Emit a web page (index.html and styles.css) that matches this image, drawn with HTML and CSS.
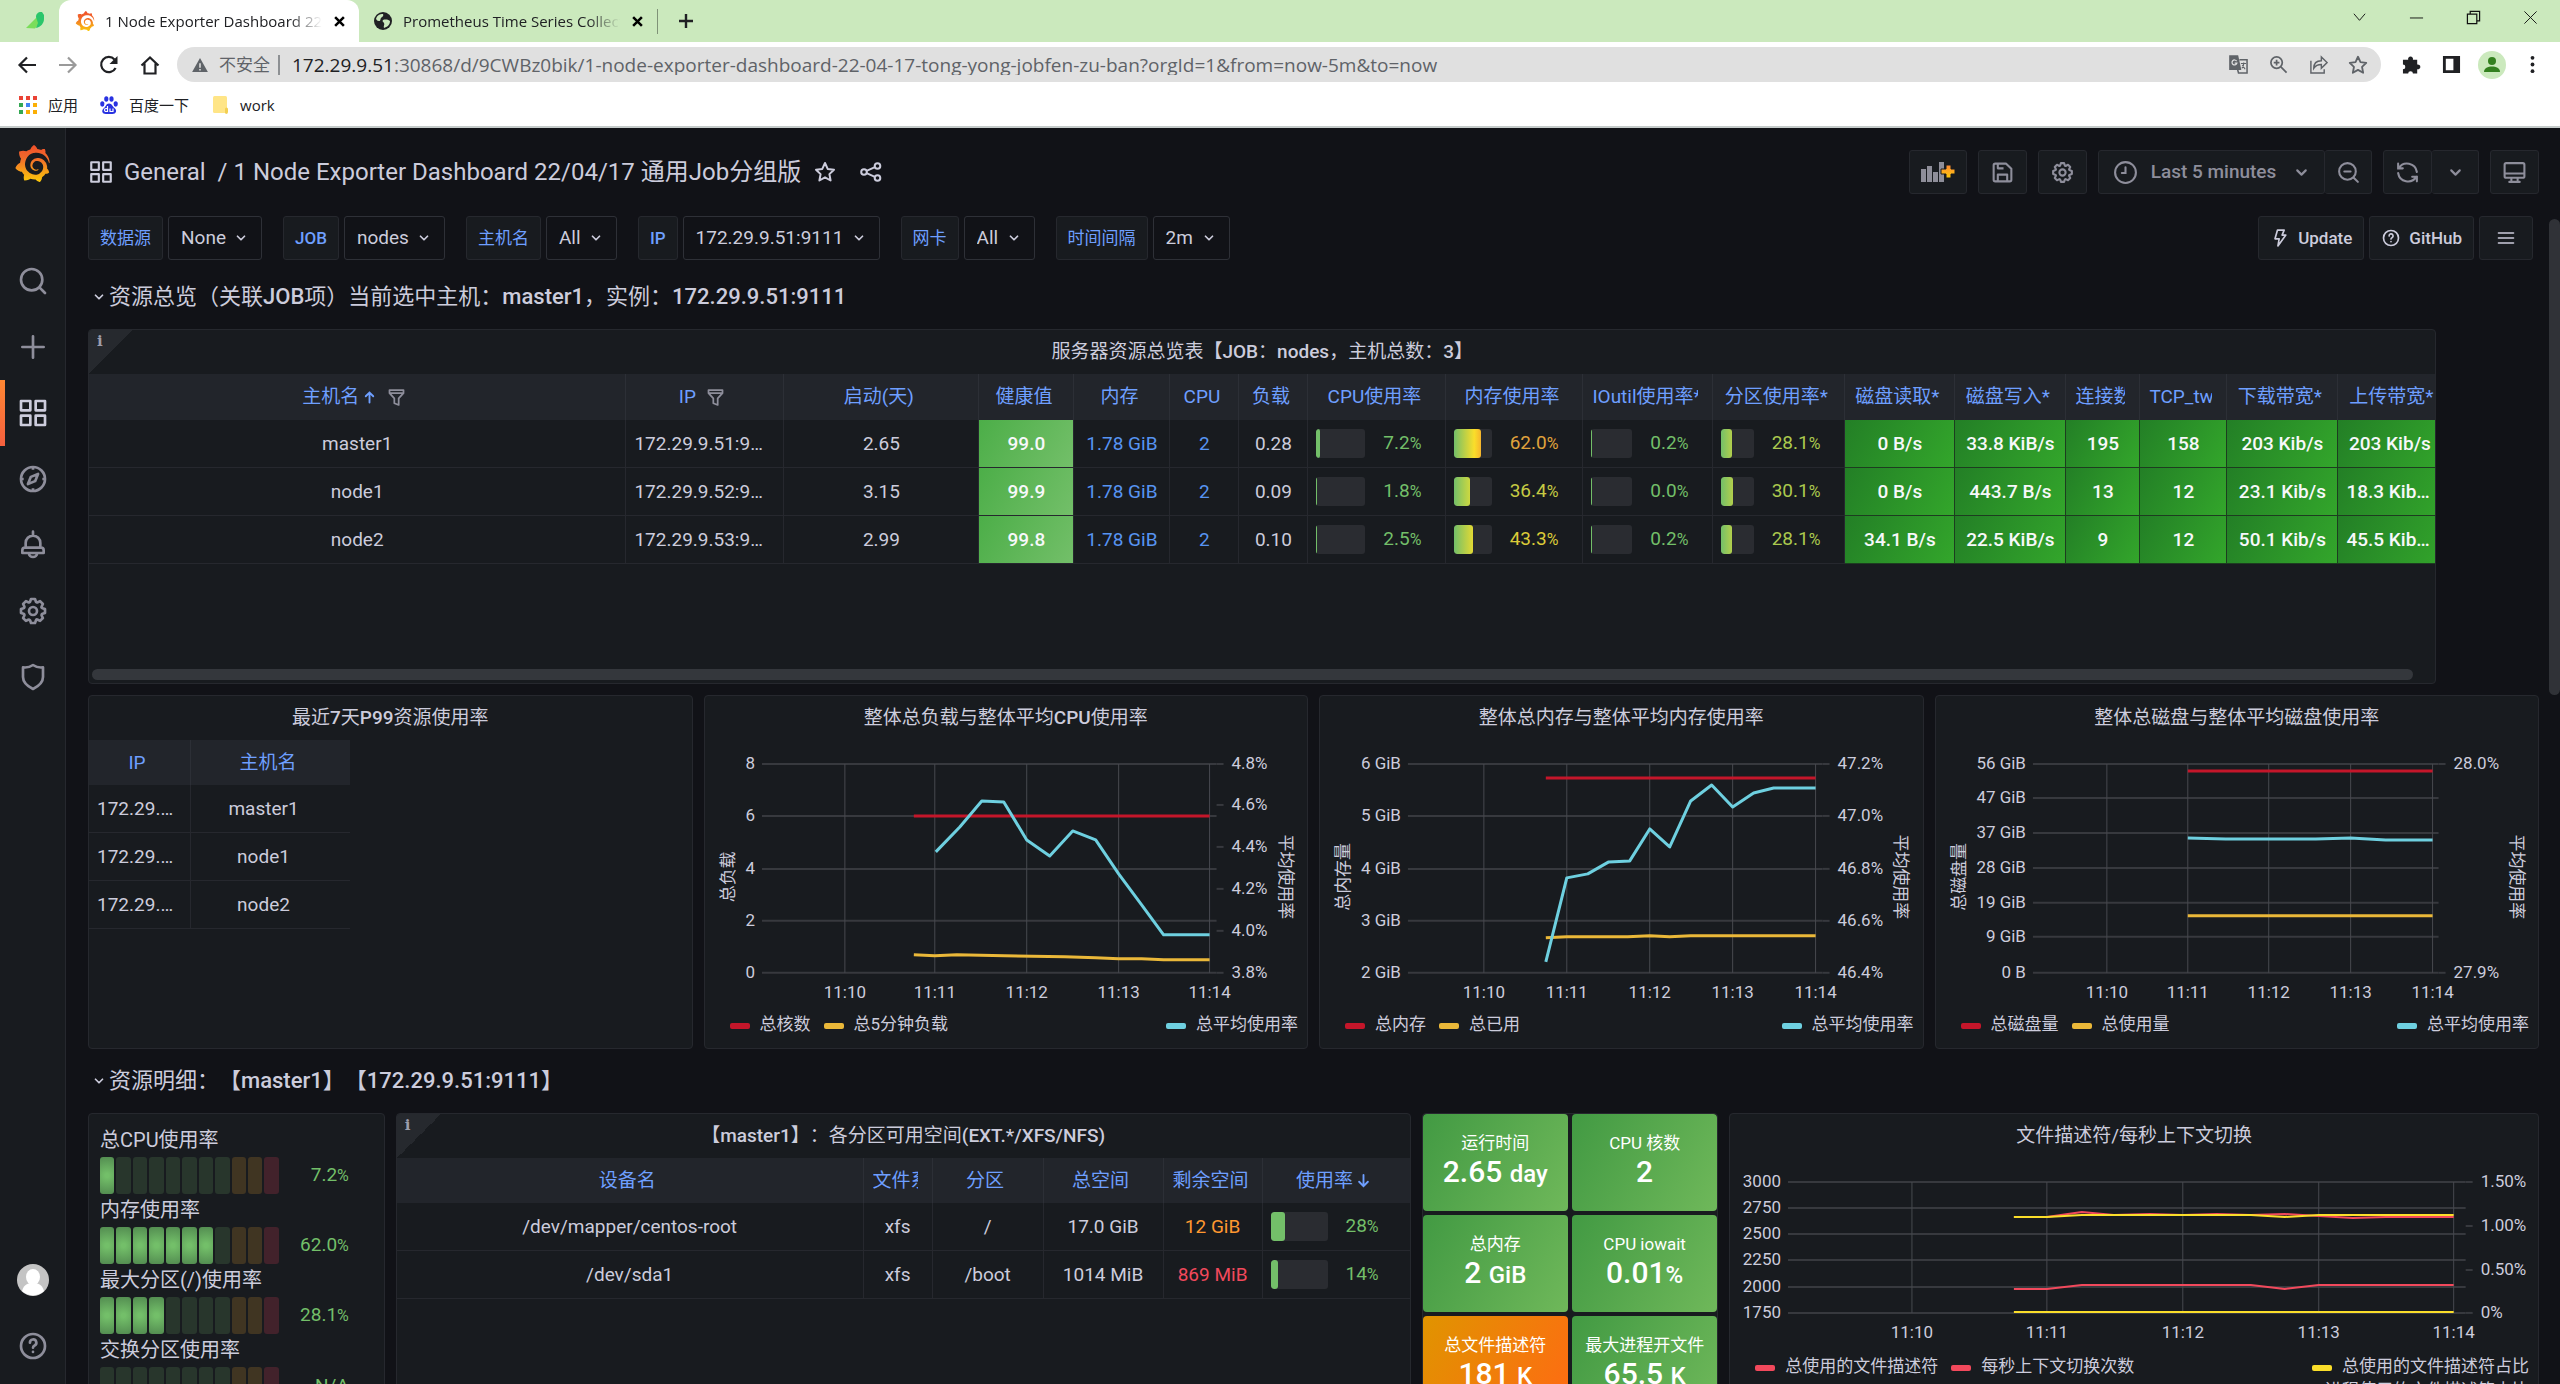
FILE: index.html
```html
<!DOCTYPE html>
<html lang="zh-CN">
<head>
<meta charset="utf-8">
<title>1 Node Exporter Dashboard 22/04/17 - Grafana</title>
<link rel="stylesheet" href="styles.css">
</head>
<body>
<svg class="sprite" width="0" height="0" aria-hidden="true">
  <defs>
    <linearGradient id="flame" x1="0" y1="0" x2="0" y2="1"><stop offset="0" stop-color="#f0502a"/><stop offset=".35" stop-color="#f1692b"/><stop offset="1" stop-color="#fbca0a"/></linearGradient>
    <linearGradient id="plusfill" x1="0" y1="0" x2="0" y2="1"><stop offset="0" stop-color="#ff8833"/><stop offset="1" stop-color="#fbca0a"/></linearGradient>
  </defs>
  <symbol id="i-grafana" viewBox="0 0 24 24"><path fill="url(#flame)" d="M23.02 10.59a8.578 8.578 0 0 0-.862-3.034 8.911 8.911 0 0 0-1.789-2.445c.337-1.342-.413-2.505-.413-2.505-1.292-.08-2.113.4-2.416.62-.052-.02-.102-.044-.154-.064-.22-.089-.446-.172-.677-.247-.231-.073-.47-.14-.711-.197a9.867 9.867 0 0 0-.875-.161C14.557.753 12.94 0 12.94 0c-1.804 1.145-2.147 2.744-2.147 2.744l-.018.093c-.098.029-.2.057-.298.088-.138.042-.275.094-.413.143-.138.055-.275.107-.41.166a8.869 8.869 0 0 0-1.557.87l-.063-.029c-2.497-.955-4.716.195-4.716.195-.203 2.658.996 4.33 1.235 4.636a11.608 11.608 0 0 0-.607 2.635C1.636 12.677.953 15.014.953 15.014c1.926 2.214 4.171 2.351 4.171 2.351.003-.002.006-.002.006-.005.285.509.615.994.986 1.446.156.19.32.371.488.548-.704 2.009.099 3.68.099 3.68 2.144.08 3.553-.937 3.849-1.173a9.784 9.784 0 0 0 3.164.501h.08l.055-.003.107-.002.103-.005.003.002c1.01 1.44 2.788 1.646 2.788 1.646 1.264-1.332 1.337-2.653 1.337-2.94v-.058c0-.02-.003-.039-.003-.06.265-.187.52-.387.758-.6a7.875 7.875 0 0 0 1.415-1.7c1.43.083 2.437-.885 2.437-.885-.236-1.49-1.085-2.216-1.264-2.354l-.018-.013-.016-.013a.217.217 0 0 1-.031-.02c.008-.092.016-.18.02-.27.011-.162.016-.323.016-.48v-.253l-.005-.098-.008-.135a1.891 1.891 0 0 0-.01-.13c-.003-.042-.008-.083-.013-.125l-.016-.124-.018-.122a6.215 6.215 0 0 0-2.032-3.73 6.015 6.015 0 0 0-3.222-1.46 6.292 6.292 0 0 0-.85-.048l-.107.002h-.063l-.044.003-.104.008a4.777 4.777 0 0 0-3.335 1.695c-.332.4-.592.84-.768 1.297a4.594 4.594 0 0 0-.312 1.817l.003.091c.005.055.007.11.013.164a3.615 3.615 0 0 0 .698 1.82 3.53 3.53 0 0 0 1.827 1.282c.33.098.66.14.971.137.039 0 .078 0 .114-.002l.063-.003c.02 0 .041-.003.062-.003.034-.002.065-.007.099-.01.007 0 .018-.003.028-.003l.031-.005.06-.008a1.18 1.18 0 0 0 .112-.02c.036-.008.072-.013.109-.024a2.634 2.634 0 0 0 .914-.415c.028-.02.056-.041.085-.065a.248.248 0 0 0 .039-.35.244.244 0 0 0-.309-.06l-.078.042c-.09.044-.184.083-.283.116a2.476 2.476 0 0 1-.475.096c-.028.003-.054.006-.083.006l-.083.002c-.026 0-.054 0-.08-.002l-.102-.006h-.012l-.024.006c-.016-.003-.031-.003-.044-.006-.031-.002-.06-.007-.091-.01a2.59 2.59 0 0 1-.724-.213 2.557 2.557 0 0 1-.667-.438 2.52 2.52 0 0 1-.805-1.475 2.306 2.306 0 0 1-.029-.444l.006-.122v-.023l.002-.031c.003-.021.003-.04.005-.06a3.163 3.163 0 0 1 1.352-2.29 3.12 3.12 0 0 1 .937-.43 2.946 2.946 0 0 1 .776-.101h.06l.07.002.045.003h.026l.07.005a4.041 4.041 0 0 1 1.635.49 3.94 3.94 0 0 1 1.602 1.662 3.77 3.77 0 0 1 .397 1.414l.005.076.003.075c.002.026.002.05.002.075 0 .024.003.052 0 .07v.065l-.002.073-.008.174a6.195 6.195 0 0 1-.08.639 5.1 5.1 0 0 1-.267.927 5.31 5.31 0 0 1-.624 1.13 5.052 5.052 0 0 1-3.237 2.014 4.82 4.82 0 0 1-.649.066l-.039.003h-.287a6.607 6.607 0 0 1-1.716-.265 6.776 6.776 0 0 1-3.4-2.274 6.75 6.75 0 0 1-.746-1.15 6.616 6.616 0 0 1-.714-2.596l-.005-.083-.002-.02v-.056l-.003-.073v-.096l-.003-.104v-.07l.003-.163c.008-.22.026-.45.054-.678a8.707 8.707 0 0 1 .28-1.355c.128-.444.286-.872.473-1.277a7.04 7.04 0 0 1 1.456-2.1 5.925 5.925 0 0 1 .953-.763c.169-.111.343-.213.524-.306.089-.05.182-.091.273-.135.047-.02.093-.042.138-.062a7.177 7.177 0 0 1 .714-.267l.145-.045c.049-.015.098-.026.148-.041.098-.029.197-.052.296-.076.049-.013.1-.02.15-.033l.15-.032.151-.028.076-.013.075-.01.153-.024c.057-.01.114-.013.171-.023l.169-.021c.036-.003.073-.008.106-.01l.073-.008.036-.003.042-.002c.057-.003.114-.008.171-.01l.086-.006h.023l.037-.003.145-.007a7.999 7.999 0 0 1 1.708.125 7.917 7.917 0 0 1 2.048.68 8.253 8.253 0 0 1 1.672 1.09l.09.077.089.078c.06.052.114.107.171.159.057.052.112.106.166.16.052.055.107.107.159.164a8.671 8.671 0 0 1 1.41 1.978c.012.026.028.052.04.078l.04.078.075.156c.023.051.05.1.07.153l.065.15a8.848 8.848 0 0 1 .45 1.34.19.19 0 0 0 .201.142.186.186 0 0 0 .172-.184c.01-.246.002-.532-.024-.856z"/></symbol>
  <symbol id="i-cog" viewBox="0 0 24 24"><path fill="currentColor" d="M21.32,9.55l-1.89-.63.89-1.78A1,1,0,0,0,20.13,6L18,3.87a1,1,0,0,0-1.15-.19l-1.78.89-.63-1.89A1,1,0,0,0,13.5,2h-3a1,1,0,0,0-.95.68L8.92,4.57,7.14,3.68A1,1,0,0,0,6,3.87L3.87,6a1,1,0,0,0-.19,1.15l.89,1.78-1.89.63A1,1,0,0,0,2,10.5v3a1,1,0,0,0,.68.95l1.89.63-.89,1.78A1,1,0,0,0,3.87,18L6,20.13a1,1,0,0,0,1.15.19l1.78-.89.63,1.89a1,1,0,0,0,.95.68h3a1,1,0,0,0,.95-.68l.63-1.89,1.78.89A1,1,0,0,0,18,20.13L20.13,18a1,1,0,0,0,.19-1.15l-.89-1.78,1.89-.63A1,1,0,0,0,22,13.5v-3A1,1,0,0,0,21.32,9.55ZM20,12.78l-1.2.4A2,2,0,0,0,17.64,16l.57,1.14-1.1,1.1L16,17.64a2,2,0,0,0-2.79,1.16l-.4,1.2H11.22l-.4-1.2A2,2,0,0,0,8,17.64l-1.14.57-1.1-1.1L6.36,16A2,2,0,0,0,5.2,13.18L4,12.78V11.22l1.2-.4A2,2,0,0,0,6.36,8L5.79,6.89l1.1-1.1L8,6.36A2,2,0,0,0,10.82,5.2l.4-1.2h1.56l.4,1.2A2,2,0,0,0,16,6.36l1.14-.57,1.1,1.1L17.64,8a2,2,0,0,0,1.16,2.79l1.2.4ZM12,8a4,4,0,1,0,4,4A4,4,0,0,0,12,8Zm0,6a2,2,0,1,1,2-2A2,2,0,0,1,12,14Z"/></symbol>
  <symbol id="i-apps" viewBox="0 0 24 24"><g fill="none" stroke="currentColor" stroke-width="2" stroke-linejoin="round"><path d="M3 3h7v7H3zM14 3h7v7h-7zM3 14h7v7H3zM14 14h7v7h-7z"/></g></symbol>
  <symbol id="i-search" viewBox="0 0 24 24"><g fill="none" stroke="currentColor" stroke-width="2" stroke-linecap="round"><circle cx="11" cy="11" r="8"/><path d="M17 17l4 4"/></g></symbol>
  <symbol id="i-plus" viewBox="0 0 24 24"><path d="M12 4v16M4 12h16" fill="none" stroke="currentColor" stroke-width="2" stroke-linecap="round"/></symbol>
  <symbol id="i-compass" viewBox="0 0 24 24"><g fill="none" stroke="currentColor" stroke-width="2" stroke-linejoin="round"><circle cx="12" cy="12" r="9"/><path d="M12 3v2M12 19v2M3 12h2M19 12h2M15.8 8.2l-2.2 5.4-5.4 2.2 2.2-5.4z"/></g></symbol>
  <symbol id="i-bell" viewBox="0 0 24 24"><path d="M12 2v3M12 5a5.500 5.500 0 0 0-5.500 5.500V14h11v-3.500A5.500 5.500 0 0 0 12 5zM6 14a2 2 0 0 0-2 2v2h16v-2a2 2 0 0 0-2-2zM9 18.500a3 2.500 0 0 0 6 0" fill="none" stroke="currentColor" stroke-width="2" stroke-linejoin="round" stroke-linecap="round"/></symbol>
  <symbol id="i-shield" viewBox="0 0 24 24"><path d="M4.500 4.800c3 .4 5.200-.2 7.500-1.800 2.300 1.600 4.500 2.200 7.500 1.800v7.200c0 3.700-3.500 7-7.500 9-4-2-7.500-5.300-7.500-9z" fill="none" stroke="currentColor" stroke-width="2" stroke-linejoin="round"/></symbol>
  <symbol id="i-help" viewBox="0 0 24 24"><g fill="none" stroke="currentColor" stroke-width="2" stroke-linecap="round"><circle cx="12" cy="12" r="9"/><path d="M9.700 9.500a2.400 2.400 0 1 1 3.500 2.100c-.8.4-1.200.8-1.200 1.700M12 16.400v.1"/></g></symbol>
  <symbol id="i-star" viewBox="0 0 24 24"><path d="M12 3l2.700 5.900 6.300.8-4.600 4.400 1.200 6.400L12 17.300l-5.600 3.200 1.200-6.400L3 9.700l6.300-.8z" fill="none" stroke="currentColor" stroke-width="2" stroke-linejoin="round"/></symbol>
  <symbol id="i-share" viewBox="0 0 24 24"><g fill="none" stroke="currentColor" stroke-width="2"><circle cx="5" cy="12" r="2.800"/><circle cx="18.500" cy="6" r="2.800"/><circle cx="18.500" cy="18" r="2.800"/><path d="M7.600 10.800l8.300-3.700M7.600 13.200l8.300 3.700"/></g></symbol>
  <symbol id="i-down" viewBox="0 0 24 24"><path d="M6 9l6 6 6-6" fill="none" stroke="currentColor" stroke-width="3" stroke-linecap="round" stroke-linejoin="round"/></symbol>
  <symbol id="i-save" viewBox="0 0 24 24"><path d="M3.500 5a1.500 1.500 0 0 1 1.500-1.500h10.500l5 5V19a1.500 1.500 0 0 1-1.500 1.500H5A1.500 1.500 0 0 1 3.500 19zM7.500 3.500V8H13M7.500 20.500V14h9v6.500" fill="none" stroke="currentColor" stroke-width="2" stroke-linejoin="round"/></symbol>
  <symbol id="i-clock" viewBox="0 0 24 24"><g fill="none" stroke="currentColor" stroke-width="2" stroke-linecap="round"><circle cx="12" cy="12" r="10"/><path d="M12 7v5.500H8.500"/></g></symbol>
  <symbol id="i-zoomout" viewBox="0 0 24 24"><g fill="none" stroke="currentColor" stroke-width="2" stroke-linecap="round"><circle cx="11" cy="11" r="8"/><path d="M17 17l4 4M8 11h6"/></g></symbol>
  <symbol id="i-sync" viewBox="0 0 24 24"><path d="M3 3.500V8h4.500M3.500 8a9.500 9.500 0 0 1 17.500 3.500M21 20.500V16h-4.500M20.500 16A9.500 9.500 0 0 1 3 12.500" fill="none" stroke="currentColor" stroke-width="2" stroke-linecap="round"/></symbol>
  <symbol id="i-monitor" viewBox="0 0 24 24"><path d="M4 3h16a1.500 1.500 0 0 1 1.500 1.500v11A1.500 1.500 0 0 1 20 17H4a1.500 1.500 0 0 1-1.500-1.500v-11A1.500 1.500 0 0 1 4 3zM2.500 13h19M9 17v2.500M15 17v2.500M7 21h10" fill="none" stroke="currentColor" stroke-width="2" stroke-linecap="round"/></symbol>
  <symbol id="i-bolt" viewBox="0 0 24 24"><path d="M9 2.500h8l-2.500 6H19l-9.500 13L11 13H6z" fill="none" stroke="currentColor" stroke-width="2" stroke-linejoin="round"/></symbol>
  <symbol id="i-menu" viewBox="0 0 24 24"><path d="M3 6h18M3 12h18M3 18h18" fill="none" stroke="currentColor" stroke-width="2" stroke-linecap="round"/></symbol>
  <symbol id="i-filter" viewBox="0 0 24 24"><path d="M4 3.500h16V7l-5.500 6v7.500l-5-2V13L4 7zM4 7h16" fill="none" stroke="currentColor" stroke-width="2" stroke-linejoin="round"/></symbol>
  <symbol id="i-up" viewBox="0 0 24 24"><path d="M12 20V4M6 10l6-6 6 6" fill="none" stroke="currentColor" stroke-width="3" stroke-linecap="round"/></symbol>
  <symbol id="i-arrowdown" viewBox="0 0 24 24"><path d="M12 3v17M5 14l7 7 7-7" fill="none" stroke="currentColor" stroke-width="3" stroke-linecap="round"/></symbol>
  <symbol id="i-close" viewBox="0 0 24 24"><path d="M5 5l14 14M19 5L5 19" fill="none" stroke="currentColor" stroke-width="4"/></symbol>
</svg>

<header class="browser">
  <div class="tabs">
    <svg class="pinned" viewBox="0 0 20 20"><path d="M1 17L12 6l3 6-5 5.500z" fill="#7bdd5a"/><path d="M11 6c0-3 2-5 5-5h1l2 3v4c0 4-3 8-8 9l2-5z" fill="#2bc66b"/></svg>
    <div class="tab active">
      <svg class="fav"><use href="#i-grafana"/></svg>
      <span class="tab-title">1 Node Exporter Dashboard 22/04/17</span>
      <button class="bare" aria-label="关闭标签页"><svg class="x"><use href="#i-close"/></svg></button>
    </div>
    <div class="tab">
      <svg class="fav" viewBox="0 0 20 20"><circle cx="10" cy="10" r="9" fill="#202124"/><path d="M3 8c1-4 4-5 7-5 1 2-1 3-2 4s0 3-2 3-2-1-3-2zM10 9c3-1 6 0 7 1 0 4-3 6-6 7-1-2 1-3 0-5s-2-1-1-3z" fill="#cbe9bd"/></svg>
      <span class="tab-title">Prometheus Time Series Collection</span>
      <button class="bare" aria-label="关闭标签页"><svg class="x"><use href="#i-close"/></svg></button>
    </div>
    <button class="newtab bare" aria-label="新标签页"><svg viewBox="0 0 16 16"><path d="M8 1v14M1 8h14" stroke="#202124" stroke-width="2.400"/></svg></button>
    <div class="winctl">
      <button class="bare" aria-label="搜索标签页"><svg viewBox="0 0 16 16"><path d="M2 4l6 7 6-7" fill="none" stroke="#111"/></svg></button>
      <button class="bare" aria-label="最小化"><svg viewBox="0 0 16 16"><path d="M1 8.500h14" stroke="#111"/></svg></button>
      <button class="bare" aria-label="还原"><svg viewBox="0 0 16 16"><path d="M1.500 4.500h10v10h-10zM4.500 4V1.500h10v10H12" fill="none" stroke="#111" stroke-width="1.300"/></svg></button>
      <button class="bare" aria-label="关闭"><svg viewBox="0 0 16 16"><path d="M1.500 1.500l13 13M14.500 1.500l-13 13" stroke="#111"/></svg></button>
    </div>
  </div>
  <div class="navbar">
    <button class="bare nav" aria-label="后退"><svg viewBox="0 0 20 20"><path d="M19 10H3M10 2.500L2.500 10l7.500 7.500" fill="none" stroke="#202124" stroke-width="2.200"/></svg></button>
    <button class="bare nav" aria-label="前进"><svg viewBox="0 0 20 20"><path d="M1 10h16M10 2.500l7.500 7.500-7.500 7.500" fill="none" stroke="#9a9a9a" stroke-width="2.200"/></svg></button>
    <button class="bare nav" aria-label="重新加载"><svg viewBox="0 0 20 20"><path d="M16.600 13A7.600 7.600 0 1 1 15.500 4.500" fill="none" stroke="#202124" stroke-width="2.200"/><path d="M18.500 1v8h-8z" fill="#202124"/></svg></button>
    <button class="bare nav" aria-label="主页"><svg viewBox="0 0 20 20"><path d="M1.500 10.500L10 2.500l8.500 8M4.500 8.500v10h11v-10" fill="none" stroke="#202124" stroke-width="2.200"/></svg></button>
    <div class="omnibox">
      <svg class="warn" viewBox="0 0 18 16"><path d="M9 0l9 16H0z" fill="#5f6368"/><path d="M9 6v5M9 12.500v1.800" stroke="#e0e0e0" stroke-width="1.800"/></svg>
      <span class="insecure">不安全</span>
      <label class="host" for="url">172.29.9.51</label>
      <input id="url" type="text" value=":30868/d/9CWBz0bik/1-node-exporter-dashboard-22-04-17-tong-yong-jobfen-zu-ban?orgId=1&amp;from=now-5m&amp;to=now">
      <svg class="omi" viewBox="0 0 20 20"><path d="M1 1h8l3 14H1zM11 5h8v14h-9l-1-4" fill="none" stroke="#5f6368" stroke-width="1.600"/><path d="M1 1h8l3 14H1z" fill="#5f6368"/><path d="M8 6.500a2.600 2.600 0 1 0 .3 2H6" fill="none" stroke="#e0e0e0" stroke-width="1.300"/><path d="M12.500 9H18M15.500 8v1c0 2-1 4-2 5M14 10.500l3 4.500" fill="none" stroke="#5f6368" stroke-width="1.200"/></svg>
      <svg class="omi" viewBox="0 0 20 20"><g fill="none" stroke="#5f6368" stroke-width="1.800"><circle cx="8" cy="8" r="6"/><path d="M12.500 12.500l6 6M8 5v6M5 8h6"/></g></svg>
      <svg class="omi" viewBox="0 0 20 20"><path d="M2 6v13h14v-4M5 14c0-5 3-8 8-8V2l6 6-6 6v-4c-4 0-6 1-8 4z" fill="none" stroke="#5f6368" stroke-width="1.500"/></svg>
      <svg class="omi star"><use href="#i-star"/></svg>
    </div>
    <svg class="ext" viewBox="0 0 20 20"><path d="M1 5h5.500a2.600 2.600 0 1 1 5 0H16v5a2.600 2.600 0 1 1 0 5v4.500h-4.500a2.500 2.500 0 0 0-5 0H1V15a2.500 2.500 0 0 0 0-5z" fill="#202124"/></svg>
    <svg class="ext" viewBox="0 0 20 20"><path d="M2.500 2.500h15v15h-15z" fill="none" stroke="#202124" stroke-width="3"/><path d="M12 2h6v16h-6z" fill="#202124"/></svg>
    <svg class="me" viewBox="0 0 28 28"><circle cx="14" cy="14" r="14" fill="#cbe9bd"/><circle cx="14" cy="10" r="4" fill="#33801f"/><path d="M6 21c0-4 4-5.500 8-5.500s8 1.500 8 5.500z" fill="#33801f"/></svg>
    <svg class="ext" viewBox="0 0 20 20"><g fill="#202124"><circle cx="10" cy="3" r="2"/><circle cx="10" cy="10" r="2"/><circle cx="10" cy="17" r="2"/></g></svg>
  </div>
  <nav class="bookmarks">
    <a href="#"><svg class="bm" viewBox="0 0 18 18"><path d="M0 0h4v4H0zM7 0h4v4H7zM14 0h4v4h-4z" fill="#ea4335"/><path d="M0 7h4v4H0zM0 14h4v4H0z" fill="#34a853"/><path d="M7 7h4v4H7z" fill="#4285f4"/><path d="M14 7h4v4h-4zM7 14h4v4H7zM14 14h4v4h-4z" fill="#fbaf04"/></svg>应用</a>
    <a href="#"><svg class="bm" viewBox="0 0 18 18"><g fill="#2932e1"><ellipse cx="2.300" cy="8" rx="2.100" ry="2.700"/><ellipse cx="6.300" cy="3" rx="2.100" ry="2.800"/><ellipse cx="11.500" cy="3" rx="2.100" ry="2.800"/><ellipse cx="15.700" cy="8" rx="2.100" ry="2.700"/><path d="M9 7.500c3 0 3.500 3 5.500 4.500 3 2.500 1.500 6-2 6H6c-4 0-5-3.500-2-6 2-1.500 2-4.500 5-4.500z"/></g><path d="M7.500 10v5.500H6a1.500 1.500 0 0 1 0-3h1.500M10 12.500v3h3v-3" fill="none" stroke="#fff" stroke-width="1.200"/></svg>百度一下</a>
    <a href="#"><svg class="bm" viewBox="0 0 18 18"><path d="M2 1.500A1.500 1.500 0 0 1 3.500 0h11A1.500 1.500 0 0 1 16 1.500V17H3.500A1.500 1.500 0 0 1 2 15.500z" fill="#ffe587"/><path d="M14 17v-4a1.500 1.500 0 0 1 3 0v3a2 2 0 0 1-2 2z" fill="#f3cf52"/></svg>work</a>
  </nav>
</header>

<div class="app">
  <aside class="side">
    <a class="logo" href="#" aria-label="Grafana"><svg><use href="#i-grafana"/></svg></a>
    <a href="#" aria-label="Search"><svg><use href="#i-search"/></svg></a>
    <a href="#" aria-label="Create"><svg><use href="#i-plus"/></svg></a>
    <a class="on" href="#" aria-label="Dashboards"><svg><use href="#i-apps"/></svg></a>
    <a href="#" aria-label="Explore"><svg><use href="#i-compass"/></svg></a>
    <a href="#" aria-label="Alerting"><svg><use href="#i-bell"/></svg></a>
    <a href="#" aria-label="Configuration"><svg><use href="#i-cog"/></svg></a>
    <a href="#" aria-label="Server Admin"><svg><use href="#i-shield"/></svg></a>
    <a class="avatar" href="#" aria-label="Profile"><svg viewBox="0 0 32 32"><circle cx="16" cy="16" r="16" fill="#c4c4c4"/><ellipse cx="16" cy="13" rx="7" ry="8" fill="#fff"/><path d="M5 27c2-7 6-8 11-8s9 1 11 8a16 16 0 0 1-22 0z" fill="#fff"/></svg></a>
    <a href="#" aria-label="Help"><svg><use href="#i-help"/></svg></a>
  </aside>

  <main class="main">
    <div class="topbar">
      <svg class="crumb-icon"><use href="#i-apps"/></svg>
      <h1><a href="#">General</a><a href="#">/ 1 Node Exporter Dashboard 22/04/17 通用Job分组版</a></h1>
      <button class="bare tool" aria-label="Star"><svg><use href="#i-star"/></svg></button>
      <button class="bare tool" aria-label="Share"><svg><use href="#i-share"/></svg></button>
      <div class="actions">
        <button class="btn wide" aria-label="Add panel"><svg class="addpanel" viewBox="0 0 34 20"><path d="M0 7h5v13H0zM6 4h5v16H6zM12 10h5v10h-5zM18 0h5v20h-5z" fill="#8e8e99"/><path d="M25 3h5v4h4v5h-4v4h-5v-4h-5V7h5z" fill="url(#plusfill)" stroke="#181b1f"/></svg></button>
        <button class="btn" aria-label="Save"><svg><use href="#i-save"/></svg></button>
        <button class="btn" aria-label="Settings"><svg><use href="#i-cog"/></svg></button>
        <div class="group">
          <button class="btn time"><svg><use href="#i-clock"/></svg>Last 5 minutes<svg class="chev"><use href="#i-down"/></svg></button>
          <button class="btn" aria-label="Zoom out"><svg><use href="#i-zoomout"/></svg></button>
        </div>
        <div class="group">
          <button class="btn" aria-label="Refresh"><svg><use href="#i-sync"/></svg></button>
          <button class="btn" aria-label="Refresh interval"><svg class="chev"><use href="#i-down"/></svg></button>
        </div>
        <button class="btn" aria-label="Cycle view mode"><svg><use href="#i-monitor"/></svg></button>
      </div>
    </div>

    <div class="vars">
      <div class="var"><label for="v1">数据源</label><span class="pick"><select id="v1"><option>None</option></select><svg><use href="#i-down"/></svg></span></div>
      <div class="var"><label for="v2"><b>JOB</b></label><span class="pick"><select id="v2"><option>nodes</option></select><svg><use href="#i-down"/></svg></span></div>
      <div class="var"><label for="v3">主机名</label><span class="pick"><select id="v3"><option>All</option></select><svg><use href="#i-down"/></svg></span></div>
      <div class="var"><label for="v4"><b>IP</b></label><span class="pick"><select id="v4"><option>172.29.9.51:9111</option></select><svg><use href="#i-down"/></svg></span></div>
      <div class="var"><label for="v5">网卡</label><span class="pick"><select id="v5"><option>All</option></select><svg><use href="#i-down"/></svg></span></div>
      <div class="var"><label for="v6">时间间隔</label><span class="pick"><select id="v6"><option>2m</option></select><svg><use href="#i-down"/></svg></span></div>
      <div class="links">
        <a class="link" href="#"><svg><use href="#i-bolt"/></svg>Update</a>
        <a class="link" href="#"><svg><use href="#i-help"/></svg>GitHub</a>
        <a class="link burger" href="#" aria-label="Dashboards"><svg><use href="#i-menu"/></svg></a>
      </div>
    </div>

    <h2 class="row-title"><svg><use href="#i-down"/></svg><span>资源总览（关联<b>JOB</b>项）当前选中主机：<b>master1</b>，实例：<b>172.29.9.51:9111</b></span></h2>

    <div class="grid">
      <section class="panel overview">
        <span class="info">i</span>
        <h3>服务器资源总览表【<b>JOB</b>：<b>nodes</b>，主机总数：<b>3</b>】</h3>
        <div class="tablewrap">
        <table class="t-over">
          <colgroup><col><col style="width:158px"><col style="width:195px"><col style="width:95px"><col style="width:96px"><col style="width:69px"><col style="width:69px"><col style="width:138px"><col style="width:137px"><col style="width:130px"><col style="width:132px"><col style="width:110px"><col style="width:111px"><col style="width:74px"><col style="width:87px"><col style="width:111px"><col style="width:111px"></colgroup>
          <thead><tr><th><span>主机名<svg class="sort"><use href="#i-up"/></svg><svg class="filter"><use href="#i-filter"/></svg></span></th><th><span>IP<svg class="filter"><use href="#i-filter"/></svg></span></th><th><span>启动(天)</span></th><th><span>健康值</span></th><th><span>内存</span></th><th><span>CPU</span></th><th><span>负载</span></th><th><span>CPU使用率</span></th><th><span>内存使用率</span></th><th><span>IOutil使用率*</span></th><th><span>分区使用率*</span></th><th><span>磁盘读取*</span></th><th><span>磁盘写入*</span></th><th><span>连接数</span></th><th><span>TCP_tw</span></th><th><span>下载带宽*</span></th><th><span>上传带宽*</span></th></tr></thead>
          <tbody>
            <tr><td>master1</td><td class="addr">172.29.9.51:9111</td><td>2.65</td><td class="ok">99.0</td><td class="blue">1.78 GiB</td><td class="blue">2</td><td>0.28</td>
              <td><div class="gauge g0"><i><b style="width:7.2%"></b></i><span>7.2<small>%</small></span></div></td>
              <td><div class="gauge g4"><i><b style="width:71%"></b></i><span>62.0<small>%</small></span></div></td>
              <td><div class="gauge g0"><i><b style="width:2%"></b></i><span>0.2<small>%</small></span></div></td>
              <td><div class="gauge g1"><i><b style="width:32%"></b></i><span>28.1<small>%</small></span></div></td>
              <td class="deep">0 B/s</td><td class="deep">33.8 KiB/s</td><td class="deep">195</td><td class="deep">158</td><td class="deep">203 Kib/s</td><td class="deep last">203 Kib/s</td></tr>
            <tr><td>node1</td><td class="addr">172.29.9.52:9111</td><td>3.15</td><td class="ok">99.9</td><td class="blue">1.78 GiB</td><td class="blue">2</td><td>0.09</td>
              <td><div class="gauge g0"><i><b style="width:2%"></b></i><span>1.8<small>%</small></span></div></td>
              <td><div class="gauge g2"><i><b style="width:41%"></b></i><span>36.4<small>%</small></span></div></td>
              <td><div class="gauge g0"><i><b style="width:2%"></b></i><span>0.0<small>%</small></span></div></td>
              <td><div class="gauge g1"><i><b style="width:36%"></b></i><span>30.1<small>%</small></span></div></td>
              <td class="deep">0 B/s</td><td class="deep">443.7 B/s</td><td class="deep">13</td><td class="deep">12</td><td class="deep">23.1 Kib/s</td><td class="deep last">18.3 Kib/s</td></tr>
            <tr><td>node2</td><td class="addr">172.29.9.53:9111</td><td>2.99</td><td class="ok">99.8</td><td class="blue">1.78 GiB</td><td class="blue">2</td><td>0.10</td>
              <td><div class="gauge g0"><i><b style="width:2%"></b></i><span>2.5<small>%</small></span></div></td>
              <td><div class="gauge g3"><i><b style="width:49%"></b></i><span>43.3<small>%</small></span></div></td>
              <td><div class="gauge g0"><i><b style="width:2%"></b></i><span>0.2<small>%</small></span></div></td>
              <td><div class="gauge g1"><i><b style="width:32%"></b></i><span>28.1<small>%</small></span></div></td>
              <td class="deep">34.1 B/s</td><td class="deep">22.5 KiB/s</td><td class="deep">9</td><td class="deep">12</td><td class="deep">50.1 Kib/s</td><td class="deep last">45.5 Kib/s</td></tr>
          </tbody>
        </table>
        </div>
        <div class="hscroll"></div>
      </section>

      <section class="panel mid">
        <h3>最近<b>7</b>天<b>P99</b>资源使用率</h3>
        <table class="t-p99">
          <colgroup><col style="width:102px"><col style="width:159px"></colgroup>
          <thead><tr><th><span>IP</span></th><th><span>主机名</span></th></tr></thead>
          <tbody>
            <tr><td>172.29.9.51:9111</td><td>master1</td></tr>
            <tr><td>172.29.9.52:9111</td><td>node1</td></tr>
            <tr><td>172.29.9.53:9111</td><td>node2</td></tr>
          </tbody>
        </table>
      </section>
      <section class="panel mid">
        <h3>整体总负载与整体平均<b>CPU</b>使用率</h3>
        <svg class="chart" id="c-cpu" viewBox="0 0 603 270"></svg>
        <div class="legend"><span class="red">总核数</span><span class="yel">总5分钟负载</span><span class="cy">总平均使用率</span></div>
      </section>
      <section class="panel mid">
        <h3>整体总内存与整体平均内存使用率</h3>
        <svg class="chart" id="c-mem" viewBox="0 0 603 270"></svg>
        <div class="legend"><span class="red">总内存</span><span class="yel">总已用</span><span class="cy">总平均使用率</span></div>
      </section>
      <section class="panel mid">
        <h3>整体总磁盘与整体平均磁盘使用率</h3>
        <svg class="chart" id="c-disk" viewBox="0 0 603 270"></svg>
        <div class="legend"><span class="red">总磁盘量</span><span class="yel">总使用量</span><span class="cy">总平均使用率</span></div>
      </section>
    </div>

    <h2 class="row-title"><svg><use href="#i-down"/></svg><span>资源明细：【<b>master1</b>】【<b>172.29.9.51:9111</b>】</span></h2>

    <div class="grid">
      <section class="panel w3 bars">
        <h4>总CPU使用率</h4>
        <div class="lcd" data-lit="1"><span>7.2<small>%</small></span></div>
        <h4>内存使用率</h4>
        <div class="lcd" data-lit="7"><span>62.0<small>%</small></span></div>
        <h4>最大分区(/)使用率</h4>
        <div class="lcd" data-lit="4"><span>28.1<small>%</small></span></div>
        <h4>交换分区使用率</h4>
        <div class="lcd" data-lit="0"><span>N/A</span></div>
      </section>
      <section class="panel w10">
        <span class="info">i</span>
        <h3>【<b>master1</b>】：各分区可用空间<b>(EXT.*/XFS/NFS)</b></h3>
        <table class="t-part">
          <colgroup><col><col style="width:69px"><col style="width:111px"><col style="width:120px"><col style="width:99px"><col style="width:147px"></colgroup>
          <thead><tr><th><span>设备名</span></th><th><span>文件系统</span></th><th><span>分区</span></th><th><span>总空间</span></th><th><span>剩余空间</span></th><th><span>使用率<svg class="sort"><use href="#i-arrowdown"/></svg></span></th></tr></thead>
          <tbody>
            <tr><td>/dev/mapper/centos-root</td><td>xfs</td><td>/</td><td>17.0 GiB</td><td class="orange">12 GiB</td><td><div class="gauge g0"><i><b style="width:26%"></b></i><span>28<small>%</small></span></div></td></tr>
            <tr><td>/dev/sda1</td><td>xfs</td><td>/boot</td><td>1014 MiB</td><td class="crit">869 MiB</td><td><div class="gauge g0"><i><b style="width:13%"></b></i><span>14<small>%</small></span></div></td></tr>
          </tbody>
        </table>
      </section>
      <section class="panel w3 stats">
        <div class="stat"><h5>运行时间</h5><p>2.65 <small>day</small></p></div>
        <div class="stat"><h5>CPU 核数</h5><p>2</p></div>
        <div class="stat"><h5>总内存</h5><p>2 <small>GiB</small></p></div>
        <div class="stat"><h5>CPU iowait</h5><p>0.01<small>%</small></p></div>
        <div class="stat hot"><h5>总文件描述符</h5><p>181 <small>K</small></p></div>
        <div class="stat"><h5>最大进程开文件</h5><p>65.5 <small>K</small></p></div>
      </section>
      <section class="panel w8">
        <h3>文件描述符/每秒上下文切换</h3>
        <svg class="chart" id="c-fd" viewBox="0 0 808 194"></svg>
        <div class="legend"><span class="rose">总使用的文件描述符</span><span class="rose">每秒上下文切换次数</span><div class="stack"><span class="lem">总使用的文件描述符占比</span><span class="lem">进程使用的文件描述符占比</span></div></div>
      </section>
    </div>
    <div class="vscroll"></div>
  </main>
</div>
<script src="charts.js"></script>
</body>
</html>
```
FILE: charts.js
```js
const NS = 'http://www.w3.org/2000/svg';

function add(svg, tag, attrs, text) {
  const el = document.createElementNS(NS, tag);
  for (const key in attrs) el.setAttribute(key, attrs[key]);
  if (text) el.textContent = text;
  svg.appendChild(el);
}

const times = ['11:10', '11:11', '11:12', '11:13', '11:14'];

function draw(id, c) {
  const svg = document.getElementById(id);
  const top = c.left[0][1];
  const bottom = c.left[c.left.length - 1][1];
  for (const [label, y] of c.left) {
    add(svg, 'path', { class: 'gridline', d: `M${c.x0} ${y}H${c.x1}` });
    add(svg, 'text', { x: c.x0 - 7, y: y + 5, class: 'end' }, label);
  }
  for (const [label, y] of c.right) {
    add(svg, 'path', { class: 'gridline', d: `M${c.x1} ${y}h7` });
    add(svg, 'text', { x: c.x1 + 15, y: y + 5 }, label);
  }
  c.ticks.forEach((x, i) => {
    add(svg, 'path', { class: 'gridline vert', d: `M${x} ${top}V${bottom}` });
    add(svg, 'text', { x, y: bottom + 25, class: 'mid' }, times[i]);
  });
  if (c.names) {
    const cy = 137;
    add(svg, 'text', { class: 'mid', transform: `translate(29 ${cy}) rotate(-90)` }, c.names[0]);
    add(svg, 'text', { class: 'mid', transform: `translate(575 ${cy}) rotate(90)` }, c.names[1]);
  }
  for (const [cls, pts] of c.series) add(svg, 'polyline', { class: 'line ' + cls, points: pts });
}

draw('c-cpu', {
  x0: 57, x1: 512, ticks: [140, 230, 322, 414, 505], names: ['总负载', '平均使用率'],
  left: [['8', 24], ['6', 76], ['4', 129], ['2', 181], ['0', 233]],
  right: [['4.8%', 24], ['4.6%', 65], ['4.4%', 107], ['4.2%', 149], ['4.0%', 191], ['3.8%', 233]],
  series: [
    ['s-red', '209,76 505,76'],
    ['s-yel', '209,215 230,216 252,215 300,216 360,217 391,218 414,219 437,219 459,220 505,220'],
    ['s-cy', '231,112 255,87 277,61 299,62 322,100 345,116 368,91 391,100 414,134 437,165 459,195 505,195']
  ]
});
draw('c-mem', {
  x0: 88, x1: 503, ticks: [164, 247, 330, 413, 496], names: ['总内存量', '平均使用率'],
  left: [['6 GiB', 24], ['5 GiB', 76], ['4 GiB', 129], ['3 GiB', 181], ['2 GiB', 233]],
  right: [['47.2%', 24], ['47.0%', 76], ['46.8%', 129], ['46.6%', 181], ['46.4%', 233]],
  series: [
    ['s-red', '226,38 496,38'],
    ['s-yel', '226,198 247,197 308,197 330,196 350,197 371,196 496,196'],
    ['s-cy', '226,222 247,138 268,134 289,122 310,121 330,89 350,107 371,61 392,45 413,67 434,53 454,48 496,48']
  ]
});
draw('c-disk', {
  x0: 97, x1: 503, ticks: [171, 252, 333, 415, 497], names: ['总磁盘量', '平均使用率'],
  left: [['56 GiB', 24], ['47 GiB', 58], ['37 GiB', 93], ['28 GiB', 128], ['19 GiB', 163], ['9 GiB', 197], ['0 B', 233]],
  right: [['28.0%', 24], ['27.9%', 233]],
  series: [
    ['s-red', '252,31 497,31'],
    ['s-yel', '252,176 497,176'],
    ['s-cy', '252,98 290,99 380,99 415,98 450,100 497,100']
  ]
});
draw('c-fd', {
  x0: 58, x1: 736, ticks: [182, 317, 453, 589, 724],
  left: [['3000', 24], ['2750', 50], ['2500', 76], ['2250', 102], ['2000', 129], ['1750', 155]],
  right: [['1.50%', 24], ['1.00%', 68], ['0.50%', 112], ['0%', 155]],
  series: [
    ['s-rose thin', '284,59 317,59 352,54 384,57 420,56 453,57 487,56 521,57 555,56 589,58 623,60 656,59 724,59'],
    ['s-rose thin', '284,131 317,131 352,127 521,127 555,131 589,127 724,127'],
    ['s-lem thin', '284,59 317,59 352,57 521,57 555,59 589,57 724,57'],
    ['s-lem thin', '284,154 724,154']
  ]
});

document.querySelectorAll('.lcd').forEach(function (lcd) {
  const lit = Number(lcd.dataset.lit);
  const value = lcd.firstElementChild;
  for (let i = 0; i < 11; i++) {
    const cell = document.createElement('i');
    cell.className = i < lit ? 'lit' : i > 9 ? 'high' : i > 7 ? 'warnz' : '';
    lcd.insertBefore(cell, value);
  }
});
```
FILE: styles.css
```css
* { box-sizing: border-box; }
html, body { height: 100%; }
body {
  margin: 0;
  display: flex;
  flex-direction: column;
  overflow: hidden;
  background: #111217;
  color: #ccccdc;
  font: 19px/24px Roboto, "Noto Sans CJK SC", sans-serif;
  text-spacing-trim: space-all;
}
h1, h2, h3, h4, h5, p { margin: 0; font-weight: 400; }
b { font-weight: 500; }
a { color: inherit; text-decoration: none; }
svg { display: block; flex: none; }
.sprite { position: absolute; }
.bare { border: 0; background: none; padding: 0; margin: 0; }

/* browser frame */
.browser { flex: none; background: #fff; color: #202124; border-bottom: 2px solid #c5cbca; font: 15px/20px "Open Sans", "Noto Sans CJK SC", sans-serif; }
.tabs { display: flex; align-items: center; height: 42px; background: #cbe9bd; }
.pinned { width: 20px; height: 20px; margin: 0 14px 0 25px; }
.tab { display: flex; align-items: center; width: 298px; height: 42px; padding: 0 12px 0 14px; gap: 10px; }
.tab.active { width: 300px; padding-left: 16px; background: #fff; border-radius: 12px 12px 0 0; }
.fav { width: 20px; height: 20px; }
.tab-title { flex: 1; overflow: hidden; white-space: nowrap; mask-image: linear-gradient(90deg, #000 85%, transparent); }
.x { width: 15px; height: 15px; }
.newtab { padding: 0 20px; border-left: 1px solid #7f9277; height: 25px; }
.newtab svg { width: 16px; height: 16px; }
.winctl { display: flex; gap: 42px; margin-left: auto; padding: 0 22px 8px 0; }
.winctl svg { width: 15px; height: 15px; }
.navbar { display: flex; align-items: center; height: 45px; padding: 0 18px 0 17px; gap: 21px; }
.nav svg { width: 20px; height: 20px; }
.omnibox { flex: 1; display: flex; align-items: center; height: 35px; margin-left: -4px; padding: 0 12px 0 15px; border-radius: 18px; background: #e0e0e0; color: #5f6368; font-size: 19px; }
.warn { width: 16px; height: 14px; margin-right: 11px; }
.insecure { padding-right: 8px; margin-right: 12px; border-right: 2px solid #8d9093; font-size: 17px; }
.host { color: #202124; }
.omnibox input { flex: 1; min-width: 0; border: 0; padding: 0; background: none; color: #5f6368; font: inherit; }
.omi { width: 19px; height: 19px; margin-left: 21px; }
.omi.star { width: 22px; height: 22px; margin-left: 19px; }
.ext { width: 19px; height: 19px; }
.me { width: 28px; height: 28px; margin: 0 -4px; }
.bookmarks { display: flex; gap: 22px; height: 39px; align-items: center; padding: 0 0 3px 19px; }
.bookmarks a { display: flex; align-items: center; gap: 11px; }
.bm { width: 18px; height: 18px; }

/* side menu */
.app { flex: 1; min-height: 0; display: flex; }
.side { flex: none; width: 66px; display: flex; flex-direction: column; background: #181b1f; border-right: 1px solid #26282e; color: #8e8e9b; padding-bottom: 5px; }
.side a { display: flex; height: 66px; align-items: center; justify-content: center; }
.side svg { width: 32px; height: 32px; }
.side .logo { height: 70px; margin-bottom: 50px; }
.side .logo svg { width: 37px; height: 37px; }
.side .on { color: #ccccdc; border-left: 5px solid #ff7a33; border-image: linear-gradient(#ff8833, #f55f3e) 1; padding-right: 5px; }
.side .avatar { margin-top: auto; }

/* header */
.main { flex: 1; min-width: 0; overflow: hidden; padding: 22px 21px 0 22px; position: relative; }
.topbar { display: flex; align-items: center; height: 44px; }
.crumb-icon { width: 26px; height: 26px; margin-right: 10px; }
h1 { display: flex; gap: 12px; font-size: 24px; line-height: 32px; white-space: nowrap; }
.tool { color: #ccccdc; margin-left: 12px; }
.tool + .tool { margin-left: 22px; }
.tool svg { width: 24px; height: 24px; }
.actions { display: flex; gap: 11px; margin-left: auto; }
.btn { display: flex; align-items: center; justify-content: center; width: 49px; height: 44px; padding: 0; border: 1px solid #26282e; border-radius: 3px; background: #181b1f; color: #8e8e9b; font: 500 19px/24px Roboto, sans-serif; }
.btn svg { width: 25px; height: 25px; }
.btn svg.chev { width: 17px; height: 17px; }
.btn.wide { width: 58px; }
.btn .addpanel { width: 34px; height: 20px; }
.btn.time { width: 227px; }
.time svg:first-child { margin-right: 13px; }
.time .chev { margin-left: 17px; }
.group { display: flex; }
.group .btn + .btn { border-left: 0; width: 47px; }

.vars { display: flex; gap: 21px; margin: 22px 6px 5px 0; }
.var { display: flex; gap: 5px; }
.var label, .pick, .link { display: flex; align-items: center; height: 44px; padding: 0 11px; border: 1px solid #26282e; border-radius: 3px; }
.var label { background: #181b1f; color: #6e9fff; font-size: 17px; }
.pick { gap: 8px; padding: 0 13px 0 12px; border-color: #2e3037; }
.pick select { appearance: none; border: 0; padding: 0; background: none; color: #ccccdc; font: inherit; }
.pick svg { width: 14px; height: 14px; }
.links { display: flex; gap: 5px; margin-left: auto; }
.link { gap: 8px; background: #181b1f; font-size: 17px; font-weight: 500; }
.link svg { width: 20px; height: 20px; }
.burger { padding: 0 16px; }

.row-title { display: flex; align-items: center; height: 64px; padding-left: 4px; gap: 3px; font-size: 22px; white-space: nowrap; }
.row-title svg { width: 14px; height: 14px; }

/* panels */
.grid { display: grid; grid-template-columns: repeat(24, minmax(0, 1fr)); gap: 11px; align-items: start; }
.panel { position: relative; overflow: hidden; grid-column: span 6; background: #181b1f; border: 1px solid #26282e; border-radius: 4px; }
.overview { grid-column: 1 / span 23; height: 355px; display: flex; flex-direction: column; }
.mid { height: 354px; }
.w3 { grid-column: span 3; height: 400px; }
.w10 { grid-column: span 10; height: 400px; }
.w8 { grid-column: span 8; height: 400px; }
h3 { height: 44px; line-height: 44px; text-align: center; font-size: 19px; white-space: nowrap; }
.info { position: absolute; left: 0; top: 0; width: 44px; height: 44px; padding: 0 8px; background: linear-gradient(135deg, #26292e 50%, transparent 50%); font: bold 15px/22px "DejaVu Serif", serif; color: #9d9dab; }

table { border-collapse: separate; border-spacing: 0; table-layout: fixed; width: 100%; }
.tablewrap { flex: 1; overflow: hidden; }
.t-over { width: calc(100% + 14px); }
.t-p99 { width: 261px; }
th { height: 45px; padding: 0 14px 0 9px; background: #22252b; color: #6e9fff; font-weight: 400; border-right: 1px solid #2c2f36; }
.t-over th { height: 46px; }
th span { display: flex; align-items: center; justify-content: safe center; overflow: hidden; white-space: nowrap; }
td { height: 48px; padding: 0 8px; text-align: center; white-space: nowrap; overflow: hidden; text-overflow: ellipsis; border-right: 1px solid #26282e; border-bottom: 1px solid #26282e; }
th:last-child, td:last-child { border-right: 0; }
td.addr { padding-right: 16px; }
.t-p99 td:last-child { padding-right: 22px; }
.sort { width: 15px; height: 15px; margin-left: 3px; }
.filter { width: 21px; height: 21px; margin-left: 9px; color: #8e8e9b; }
.blue { color: #5794f2; }
.orange { color: #ff9830; }
.crit { color: #f2495c; }
.ok { background: linear-gradient(120deg, #4cae48, #73bf69) padding-box; color: #f7f8fa; }
.deep { background: linear-gradient(120deg, #237f26, #33a62b) padding-box; color: #f7f8fa; border-color: #1d3d20; }
.ok, .deep { font-weight: 500; }
.deep.last { padding-right: 16px; }
.gauge { display: flex; align-items: center; height: 29px; padding-right: 16px; gap: 18px; }
.gauge i { flex: 1; height: 29px; border-radius: 3px; background: #2a2c31; overflow: hidden; }
.gauge b { display: block; height: 29px; border-radius: 3px; }
.gauge small, .lcd small { font-size: 16px; }
.g0 b { background: #73bf69; }
.g0 { color: #73bf69; }
.g1 b { background: linear-gradient(90deg, #73bf69, #b3cf4c); }
.g1 { color: #abc94e; }
.g2 b { background: linear-gradient(90deg, #73bf69, #cdd840); }
.g2 { color: #c6cb43; }
.g3 b { background: linear-gradient(90deg, #73bf69, #e2d934); }
.g3 { color: #dccb38; }
.g4 b { background: linear-gradient(90deg, #73bf69, #fade2a 75%, #f7b52d); }
.g4 { color: #e0a33c; }
.t-part .gauge { padding-right: 23px; }
.hscroll { height: 11px; margin: 0 22px 3px 3px; border-radius: 6px; background: #34373c; }
.vscroll { position: absolute; right: 0; top: 91px; width: 11px; height: 476px; border-radius: 6px; background: #303237; }

/* charts */
.chart { width: 100%; height: auto; font-size: 17px; fill: #ccccdc; }
.chart .end { text-anchor: end; }
.chart .mid { text-anchor: middle; }
.gridline { stroke: #37393e; stroke-width: 2; fill: none; }
.gridline.vert { stroke: #47494f; stroke-width: 1; }
.line { fill: none; stroke-width: 3; stroke-linejoin: round; }
.thin { stroke-width: 2; }
.s-red { stroke: #c4162a; }
.s-yel { stroke: #eab839; }
.s-cy { stroke: #6ed0e0; }
.s-rose { stroke: #f2495c; }
.s-lem { stroke: #fade2a; }
.legend { display: flex; align-items: flex-start; gap: 13px; margin-top: 2px; padding: 0 9px 0 25px; font-size: 17px; line-height: 24px; white-space: nowrap; }
.legend span { display: flex; align-items: center; gap: 10px; }
.legend span::before { content: ""; width: 20px; height: 6px; margin-top: 4px; border-radius: 2px; }
.legend .cy, .stack { margin-left: auto; }
.stack { display: flex; flex-direction: column; align-items: flex-end; }
.legend .red::before { background: #c4162a; }
.legend .yel::before { background: #eab839; }
.legend .cy::before { background: #6ed0e0; }
.legend .rose::before { background: #f2495c; }
.legend .lem::before { background: #fade2a; }

/* bar gauge list */
.bars { padding: 13px 35px 0 11px; }
h4 { height: 30px; font-size: 20px; line-height: 26px; }
.lcd { display: flex; align-items: center; height: 37px; gap: 2px; margin-bottom: 3px; }
.lcd i { flex: 1; height: 37px; border-radius: 3px; background: #28362c; }
.lcd i.warnz { background: #403522; }
.lcd i.high { background: #42222b; }
.lcd i.lit { background: radial-gradient(circle, #73bf69 10%, #528b50); }
.lcd span { width: 68px; text-align: right; color: #73bf69; }

/* stat tiles */
.stats { display: grid; grid-template-columns: 1fr 1fr; grid-auto-rows: 97px; gap: 4px; }
.stat { display: flex; flex-direction: column; align-items: center; padding-top: 17px; border-radius: 4px; background: linear-gradient(120deg, #429a43, #6fb85a); color: #fff; white-space: nowrap; }
.stat.hot { background: linear-gradient(120deg, #e09400, #ff6a13); }
h5 { font-size: 17px; line-height: 24px; }
.stat p { font-size: 30px; line-height: 34px; font-weight: 500; }
.stat small { font-size: 24px; }
```
